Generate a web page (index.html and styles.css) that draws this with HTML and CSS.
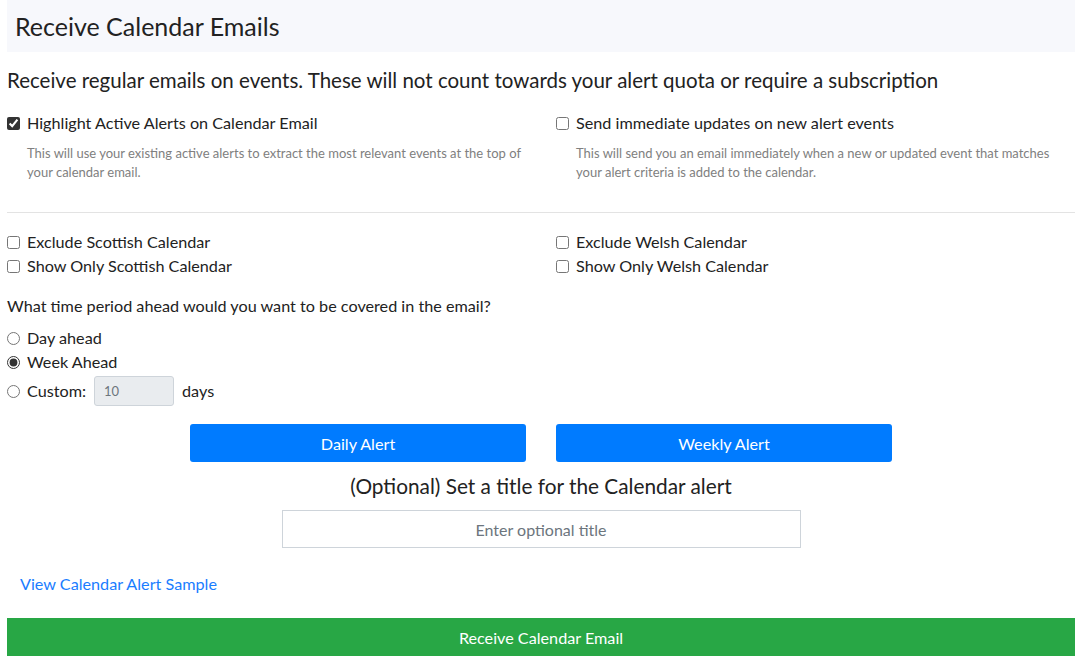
FILE: index.html
```html
<!DOCTYPE html>
<html lang="en">
<head>
<meta charset="utf-8">
<title>Receive Calendar Emails</title>
<link rel="stylesheet" href="styles.css">
</head>
<body>
<div class="page">
  <div class="panel-head"><h2 class="panel-title">Receive Calendar Emails</h2></div>
  <p class="lead">Receive regular emails on events. These will not count towards your alert quota or require a subscription</p>

  <div class="two-col options">
    <div class="opt">
      <label class="check"><input type="checkbox" checked><span>Highlight Active Alerts on Calendar Email</span></label>
      <p class="desc">This will use your existing active alerts to extract the most relevant events at the top of your calendar email.</p>
    </div>
    <div class="opt right">
      <label class="check"><input type="checkbox"><span>Send immediate updates on new alert events</span></label>
      <p class="desc">This will send you an email immediately when a new or updated event that matches your alert criteria is added to the calendar.</p>
    </div>
  </div>

  <hr class="divider">

  <div class="two-col cals">
    <div class="stack">
      <label class="check"><input type="checkbox"><span>Exclude Scottish Calendar</span></label>
      <label class="check"><input type="checkbox"><span>Show Only Scottish Calendar</span></label>
    </div>
    <div class="stack right">
      <label class="check"><input type="checkbox"><span>Exclude Welsh Calendar</span></label>
      <label class="check"><input type="checkbox"><span>Show Only Welsh Calendar</span></label>
    </div>
  </div>

  <p class="question">What time period ahead would you want to be covered in the email?</p>
  <div class="stack radios">
    <label class="check"><input type="radio" name="period"><span>Day ahead</span></label>
    <label class="check"><input type="radio" name="period" checked><span>Week Ahead</span></label>
    <label class="check custom"><input type="radio" name="period"><span>Custom:</span><input class="days" type="text" value="10" disabled><span class="unit">days</span></label>
  </div>

  <div class="btn-row">
    <button class="btn blue">Daily Alert</button>
    <button class="btn blue">Weekly Alert</button>
  </div>

  <p class="title-label">(Optional) Set a title for the Calendar alert</p>
  <div class="title-wrap"><input class="title-input" type="text" placeholder="Enter optional title"></div>

  <a class="sample-link" href="#">View Calendar Alert Sample</a>

  <button class="btn green">Receive Calendar Email</button>
</div>
</body>
</html>
```

FILE: styles.css
```css
* { box-sizing: border-box; }
html, body { margin: 0; padding: 0; background: #fff; }
body {
  font-family: "Lato", "Liberation Sans", sans-serif;
  color: #222;
  font-size: 16px;
}
.page {
  width: 1068px;
  margin-left: 7px;
}
.panel-head {
  background: #f7f8fc;
  height: 52px;
  padding: 0 8px;
  display: flex;
  align-items: center;
}
.panel-title {
  margin: 0;
  font-size: 25px;
  font-weight: 400;
  color: #222;
}
.lead {
  margin: 16px 0 0;
  font-size: 20.5px;
  line-height: 24px;
  color: #222;
}
.two-col {
  display: grid;
  grid-template-columns: 549px 1fr;
}
.options { margin-top: 19px; }
.check {
  display: flex;
  align-items: center;
  font-size: 16.2px;
  line-height: 24px;
  color: #222;
}
.check input[type="checkbox"], .check input[type="radio"] {
  width: 13px;
  height: 13px;
  margin: 0 7px 0 0;
  accent-color: #333;
}
.desc {
  margin: 9px 0 0 20px;
  font-size: 13px;
  line-height: 19px;
  color: #808080;
  max-width: 505px;
}
.right .desc { max-width: 485px; }
.divider {
  border: 0;
  border-top: 1px solid #e3e3e3;
  margin: 30px 0 17px;
}
.stack { display: flex; flex-direction: column; }
.question {
  margin: 16px 0 0;
  font-size: 16.2px;
  line-height: 24px;
  color: #222;
}
.radios { margin-top: 8px; }
.custom { margin-top: 2px; }
.days {
  width: 80px;
  height: 30px;
  margin-left: 8px;
  padding: 0 9px;
  font-family: inherit;
  font-size: 13px;
  color: #6c757d;
  background: #e9ecef;
  border: 1px solid #ced4da;
  border-radius: 3px;
}
.unit { margin-left: 8px; }
.btn-row {
  display: flex;
  justify-content: center;
  gap: 30px;
  margin-top: 18px;
}
.btn {
  border: 0;
  font-family: inherit;
  font-size: 16.2px;
  color: #fff;
  cursor: pointer;
}
.blue {
  width: 336px;
  height: 38px;
  background: #007bff;
  border-radius: 3px;
}
.title-label {
  margin: 12px 0 0;
  text-align: center;
  font-size: 20.8px;
  line-height: 24px;
  color: #222;
}
.title-wrap { display: flex; justify-content: center; margin-top: 12px; }
.title-input {
  width: 519px;
  height: 38px;
  border: 1px solid #ced4da;
  text-align: center;
  font-family: inherit;
  font-size: 16px;
}
.title-input::placeholder { color: #6c757d; }
.sample-link {
  display: block;
  margin: 24px 0 0 13px;
  color: #1a7dff;
  text-decoration: none;
  font-size: 16.2px;
  line-height: 24px;
}
.green {
  display: block;
  width: 100%;
  height: 38px;
  margin-top: 22px;
  background: #28a745;
  font-size: 16.2px;
}
```
